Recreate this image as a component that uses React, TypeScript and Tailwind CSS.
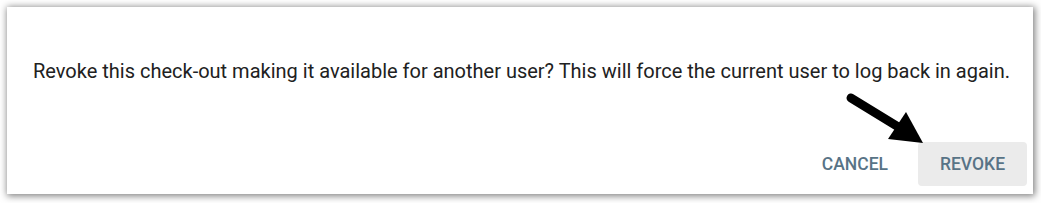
export default function App() {
  return (
    <div className="relative h-[203px] w-[1041px] bg-white p-[7px] font-['Roboto',sans-serif]">
      <div className="flex h-[187px] w-[1026px] flex-col bg-white shadow-[1px_1px_7px_1px_rgba(0,0,0,0.5)]">
        <div className="whitespace-nowrap pl-[26px] pt-[50px] text-[20px] leading-[28px] text-[#212121]">
          Revoke this check-out making it available for another user? This will force the current user to log back in again.
        </div>
        <div className="mt-auto flex items-center justify-end gap-[14px] pb-[8px] pr-[6px]">
          <button className="h-[44px] rounded px-[16px] text-[17.5px] font-medium text-[#587386]">
            CANCEL
          </button>
          <button className="h-[44px] w-[109px] rounded bg-[#ebebeb] text-[17.5px] font-medium text-[#587386]">
            REVOKE
          </button>
        </div>
      </div>
      {/* annotation arrow */}
      <svg className="absolute left-0 top-0" width="1041" height="203" viewBox="0 0 1041 203">
        <line x1="851" y1="98" x2="900" y2="128" stroke="#000" strokeWidth="9" strokeLinecap="round" />
        <polygon points="888,139 906,112 923,143" fill="#000" />
      </svg>
    </div>
  )
}
